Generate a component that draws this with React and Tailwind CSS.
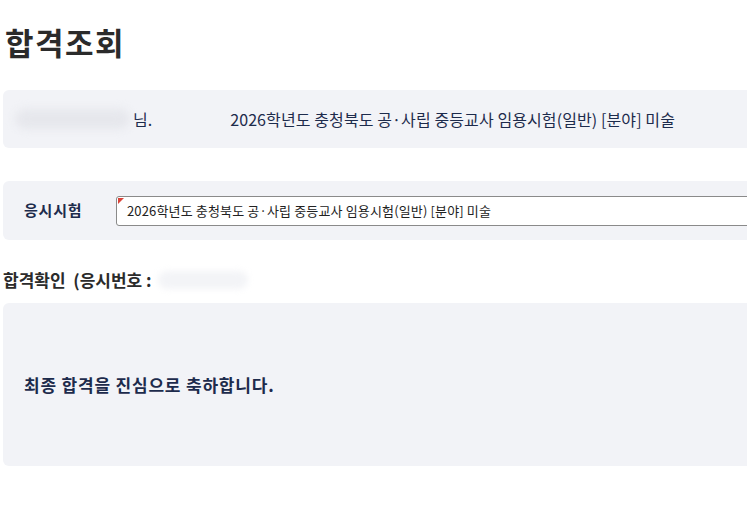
export default function App() {
  const font = { fontFamily: '"Noto Sans CJK KR", "Noto Sans", sans-serif' };
  return (
    <div className="w-[747px] h-[530px] overflow-hidden bg-white" style={font}>
      <div className="w-[800px] pl-[3px]">
        <h1 className="pt-[20px] pl-[2px] text-[31px] leading-[44px] font-bold text-[#2b2b2b] tracking-[1.5px]">
          합격조회
        </h1>

        <div className="mt-[26px] h-[58px] rounded-md bg-[#f2f3f7] flex items-center pl-[12px]">
          <div className="w-[115px] h-[20px] rounded-full bg-[#e6e7ec] blur-[4px]" />
          <span className="ml-[3px] text-[16px] text-[#1d2b4c]">님.</span>
          <span className="ml-[78px] text-[16px] text-[#1d2b4c] tracking-[0.1px]">
            2026학년도 충청북도 공·사립 중등교사 임용시험(일반) [분야] 미술
          </span>
        </div>

        <div className="mt-[33px] h-[59px] rounded-md bg-[#f2f3f7] flex items-center pl-[21px]">
          <span className="w-[92px] text-[15px] font-bold text-[#1d2b4c] tracking-[0.8px]">응시시험</span>
          <div className="relative flex-1 h-[30px] bg-white border border-[#8a8a8a] rounded-[3px] flex items-center pl-[10px]">
            <span className="absolute left-[1px] top-[1px] w-0 h-0 border-t-[6px] border-t-[#d9443a] border-r-[6px] border-r-transparent" />
            <span className="text-[13px] text-[#222] tracking-[0.15px]">
              2026학년도 충청북도 공·사립 중등교사 임용시험(일반) [분야] 미술
            </span>
          </div>
        </div>

        <div className="mt-[27px] flex items-center h-[26px]">
          <span className="text-[17px] font-bold text-[#2b2b2b] whitespace-pre">합격확인  (응시번호 :</span>
          <div className="ml-[6px] w-[90px] h-[18px] rounded-full bg-[#f3f4f7] blur-[3px]" />
        </div>

        <div className="mt-[10px] h-[163px] rounded-md bg-[#f2f3f7] flex items-center pl-[21px]">
          <span className="text-[17px] font-bold text-[#1d2b4c] tracking-[0.8px]">최종 합격을 진심으로 축하합니다.</span>
        </div>
      </div>
    </div>
  );
}
